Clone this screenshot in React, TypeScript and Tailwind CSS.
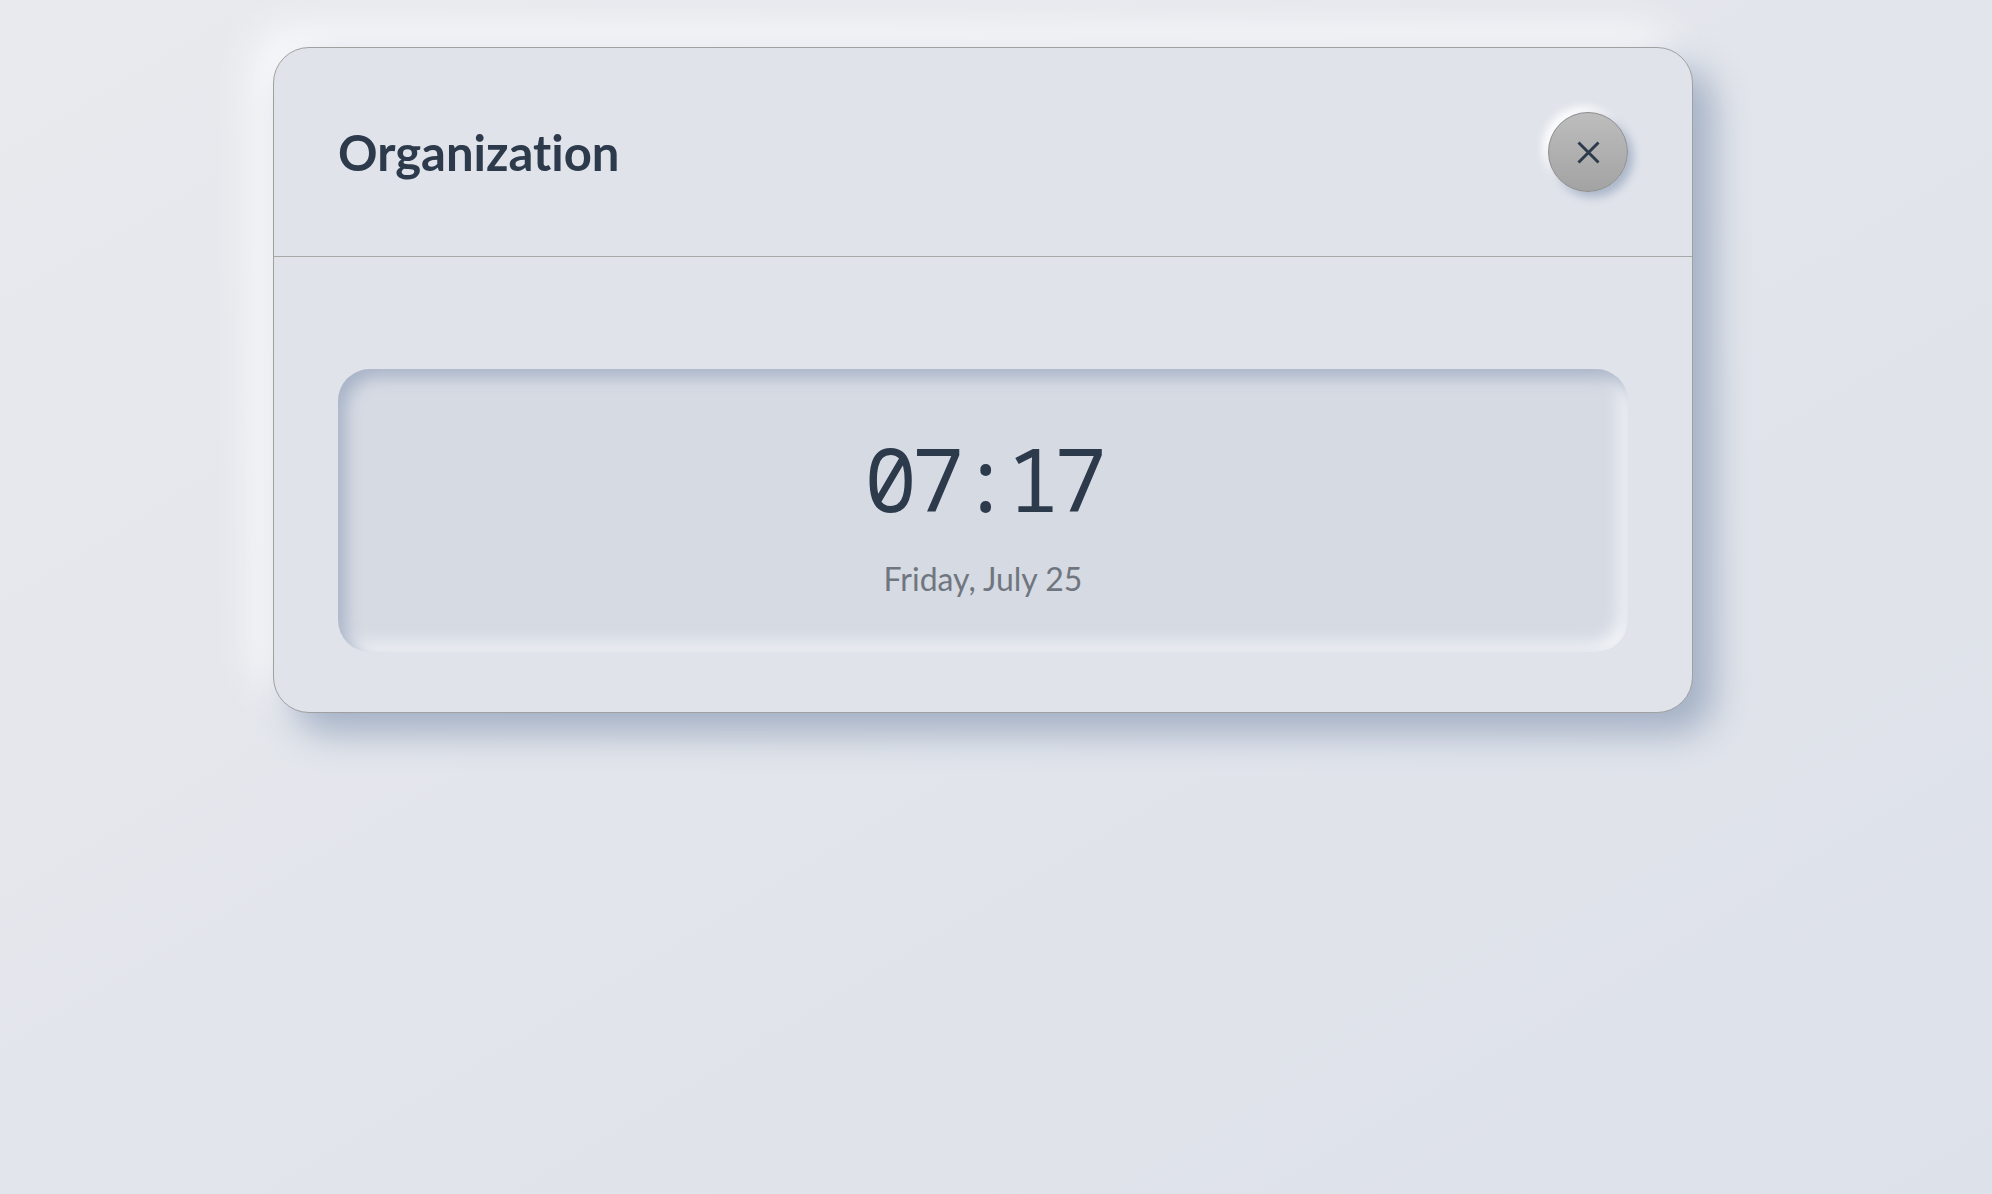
export default function App() {
    return (
        <div className="min-h-screen w-full bg-gradient-to-br from-[#e8eaee] via-[#e2e5eb] to-[#dde1e9] font-['Lato',sans-serif] [font-variant-ligatures:none]">
            <div className="pl-[273px] pt-[47px]">
                <div className="w-[1420px] rounded-[36px] border border-[#a0a0a0] bg-[#e0e3ea] shadow-[20px_20px_36px_#a3b0c5,-20px_-20px_40px_#f8f9fb]">
                    <div className="flex items-center justify-between border-b border-[#a8a8a8] p-16">
                        <h2 className="text-[49px] font-bold leading-none text-[#2d3a4b]">Organization</h2>
                        <button className="flex h-20 w-20 items-center justify-center rounded-full border border-[#8e8e8e] bg-gradient-to-b from-[#bdbdbd] to-[#a3a3a3] shadow-[5px_5px_10px_#a9b5c9,-5px_-5px_10px_#ffffff]">
                            <svg width="23" height="23" viewBox="0 0 23 23">
                                <path d="M1.5 1.5 21.5 21.5 M21.5 1.5 1.5 21.5" stroke="#2d3a4b" strokeWidth="3" fill="none" />
                            </svg>
                        </button>
                    </div>
                    <div className="px-16 pt-[112px] pb-[60px]">
                        <div className="flex h-[283px] flex-col items-center rounded-[32px] bg-[#d6dae3] pt-[65px] shadow-[inset_8px_8px_16px_#a9b4c8,inset_-8px_-8px_16px_#f3f5f8]">
                            <p className="font-['Noto_Sans_Mono',monospace] text-[88px] leading-none tracking-[-0.06em] text-[#2d3a4b]">07:17</p>
                            <p className="mt-[41px] text-[32px] leading-none text-[#70767f]">Friday, July 25</p>
                        </div>
                    </div>
                </div>
            </div>
        </div>
    )
}
